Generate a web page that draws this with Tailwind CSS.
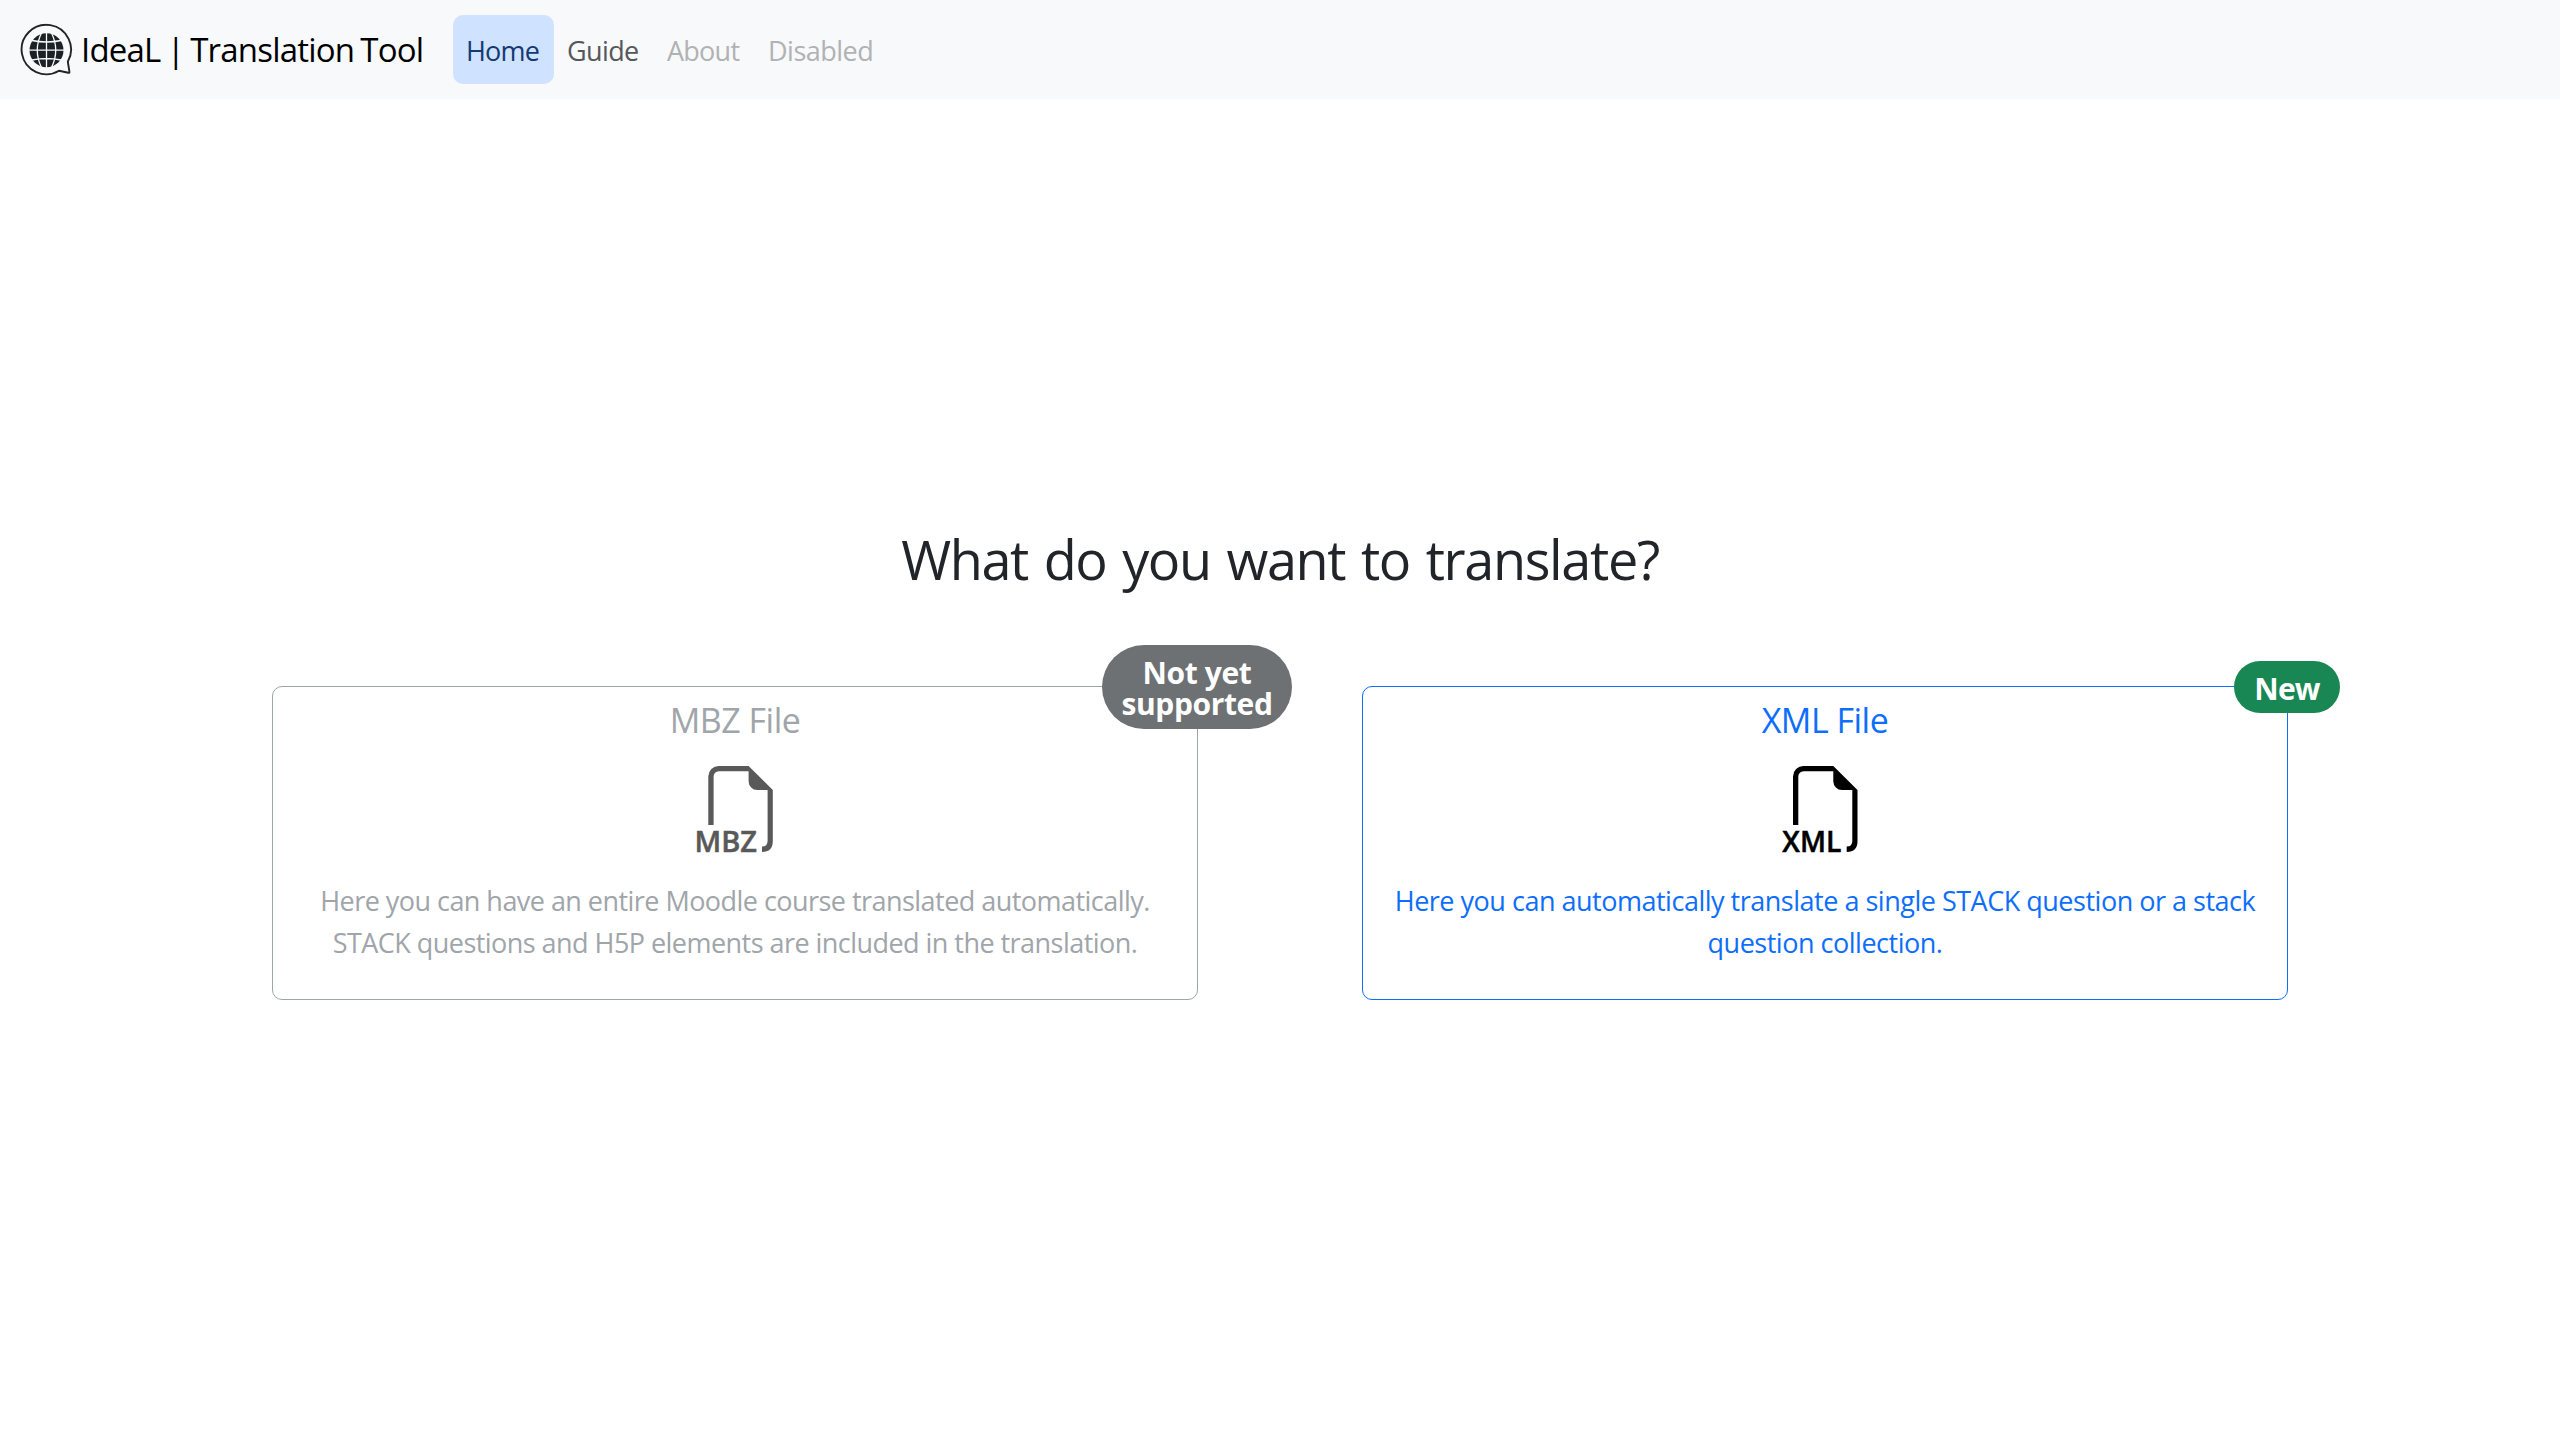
<!DOCTYPE html>
<html lang="en">
<head>
<meta charset="utf-8">
<title>IdeaL | Translation Tool</title>
<script src="https://cdn.jsdelivr.net/npm/@tailwindcss/browser@4"></script>
</head>
<body class="flex h-screen flex-col overflow-hidden bg-white font-['Open_Sans','Noto_Sans',sans-serif] text-[27px] leading-[42px] text-[#212529]">
<header class="flex h-[99px] shrink-0 items-center bg-[#f8f9fa]">
  <a class="flex w-[453px] items-center pl-[20px] text-[33px] tracking-[-0.8px] [word-spacing:-1.6px] text-black">
    <svg class="mr-[8px] h-[53px] w-[53px] shrink-0 translate-y-[0.5px]" viewBox="0 0 53 53" fill="none">
      <path d="M47.8 38.2A24.7 24.7 0 1 0 39 47.2L48.3 49.3Q49.8 49.5 49.4 48Z" fill="#f8f9fa" stroke="#212529" stroke-width="1.9" stroke-linejoin="round"/>
      <circle cx="26.5" cy="26.7" r="17" fill="#1b2125"/>
      <g stroke="#f8f9fa" stroke-width="1.3">
        <path d="M26.5 9v35.500M9 26.700h35M12 17Q26.500 20 41 17M12 36.500Q26.500 33.500 41 36.500"/>
        <path d="M21.500 9.500Q13 26.700 21.500 44M31.500 9.500Q40 26.700 31.500 44"/>
      </g>
    </svg>
    <span class="whitespace-nowrap">IdeaL | Translation Tool</span>
  </a>
  <nav class="flex items-center">
    <a class="h-[69px] w-[101px] rounded-[10px] bg-[#cfe2ff] pt-[15px] pl-[13px] tracking-[-0.8px] text-[#153a73]">Home</a>
    <a class="h-[69px] w-[99px] pt-[15px] pl-[13px] tracking-[-0.6px] text-[#55585b]">Guide</a>
    <a class="h-[69px] w-[100px] pt-[15px] pl-[14px] tracking-[-0.75px] text-[#b0b2b4]">About</a>
    <a class="h-[69px] pt-[15px] pl-[15px] tracking-[-0.5px] text-[#b0b2b4]">Disabled</a>
  </nav>
</header>
<main class="flex flex-col items-center pt-[427px]">
  <h1 class="text-[54px] leading-[67px] tracking-[-1.35px] [word-spacing:3px]">What do you want to translate?</h1>
  <div class="mt-[93px] grid grid-cols-[926px_926px] gap-[164px] text-center">
    <section class="relative flex h-[314px] flex-col items-center rounded-[10px] border border-[#a0a5aa] pt-[12px] text-[#a0a5aa]">
      <h2 class="text-[34px] tracking-[-0.5px]">MBZ File</h2>
      <svg class="mt-[25px] h-[96px] w-[86px]" viewBox="0 0 86 96" fill="#595959">
        <path transform="translate(16.3 0)" d="M0 59V10.500A10.500 10.500 0 0 1 10.500 0H40.300L64.500 24V75Q64.500 86 53.700 86V80.600Q59.300 80.600 59.300 75V24H49A8.700 8.700 0 0 1 40.300 15.300V5.200H10.500A5.300 5.300 0 0 0 5.300 10.500V59Z"/>
        <text x="2.500" y="85.500" font-family="Open Sans" font-size="29.500" font-weight="600" stroke="#595959" stroke-width="0.500" textLength="62.500" lengthAdjust="spacingAndGlyphs">MBZ</text>
      </svg>
      <p class="mt-[18px] tracking-[-0.54px]">Here you can have an entire Moodle course translated automatically.<br>STACK questions and H5P elements are included in the translation.</p>
      <span class="absolute top-[-42px] left-[829px] h-[84px] w-[190px] rounded-[42px] bg-[#6d7174] pt-[12px] text-[30px] leading-[31px] font-bold tracking-[-0.38px] text-white">Not yet<br>supported</span>
    </section>
    <section class="relative flex h-[314px] flex-col items-center rounded-[10px] border border-[#0d6efd] pt-[12px] text-[#0d6efd]">
      <h2 class="text-[34px] tracking-[-0.5px]">XML File</h2>
      <svg class="mt-[25px] h-[96px] w-[86px]" viewBox="0 0 86 96" fill="#000">
        <path transform="translate(11 0)" d="M0 59V10.500A10.500 10.500 0 0 1 10.500 0H40.300L64.500 24V75Q64.500 86 53.700 86V80.600Q59.300 80.600 59.300 75V24H49A8.700 8.700 0 0 1 40.300 15.300V5.200H10.500A5.300 5.300 0 0 0 5.300 10.500V59Z"/>
        <text x="0.300" y="85.500" font-family="Open Sans" font-size="29.500" font-weight="600" stroke="#000" stroke-width="0.500" textLength="59" lengthAdjust="spacingAndGlyphs">XML</text>
      </svg>
      <p class="mt-[18px] tracking-[-0.49px]">Here you can automatically translate a single STACK question or a stack<br>question collection.</p>
      <span class="absolute top-[-26px] left-[871px] h-[52px] w-[106px] rounded-[26px] bg-[#198754] pt-[12px] text-[30px] leading-[31px] font-bold tracking-[-0.8px] text-white">New</span>
    </section>
  </div>
</main>
</body>
</html>
